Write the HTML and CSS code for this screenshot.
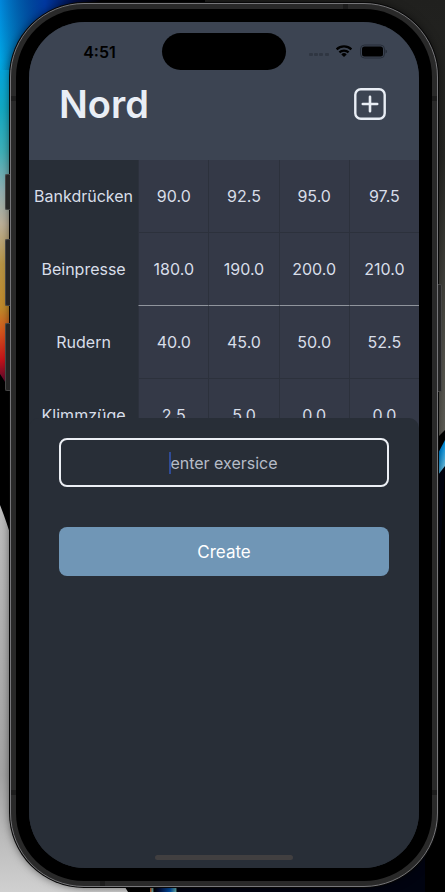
FILE: index.html
```html
<!DOCTYPE html>
<html lang="en">
<head>
  <meta charset="utf-8">
  <meta name="viewport" content="width=device-width, initial-scale=1">
  <title>Nord</title>
  <link rel="stylesheet" href="styles.css">
</head>
<body>
  <svg class="wallpaper" viewBox="0 0 445 892" preserveAspectRatio="none" aria-hidden="true">
    <defs>
      <linearGradient id="glow" x1="0" y1="0" x2="0" y2="400" gradientUnits="userSpaceOnUse">
        <stop offset="0" stop-color="#0087dc"/>
        <stop offset=".15" stop-color="#00a6e4"/>
        <stop offset=".27" stop-color="#12a9c4"/>
        <stop offset=".38" stop-color="#3fb0b8"/>
        <stop offset=".48" stop-color="#94aeb0"/>
        <stop offset=".56" stop-color="#bcb099"/>
        <stop offset=".66" stop-color="#b89646"/>
        <stop offset=".77" stop-color="#c08a2a"/>
        <stop offset=".83" stop-color="#d4551c"/>
        <stop offset=".9" stop-color="#c4131a"/>
        <stop offset=".96" stop-color="#4a0830"/>
        <stop offset="1" stop-color="#000"/>
      </linearGradient>
      <linearGradient id="night">
        <stop offset="0" stop-color="#000a3c" stop-opacity="0"/>
        <stop offset=".45" stop-color="#0038a0"/>
        <stop offset=".75" stop-color="#000f4c"/>
        <stop offset="1" stop-color="#000008"/>
      </linearGradient>
      <linearGradient id="stone" x1="0" y1="0" x2="0" y2="1">
        <stop offset="0" stop-color="#20201e"/>
        <stop offset=".35" stop-color="#262623"/>
        <stop offset=".8" stop-color="#54534c"/>
        <stop offset="1" stop-color="#62615a"/>
      </linearGradient>
      <linearGradient id="fog" x1="0" y1="0" x2="0" y2="1">
        <stop offset="0" stop-color="#bdbdbd"/>
        <stop offset=".7" stop-color="#a4a4a4"/>
        <stop offset="1" stop-color="#d0d0d0"/>
      </linearGradient>
      <linearGradient id="streak" x1="0" y1="0" x2="1" y2="1">
        <stop offset="0" stop-color="#0028a8"/>
        <stop offset=".5" stop-color="#0090e0"/>
        <stop offset="1" stop-color="#d8e8d8"/>
      </linearGradient>
      <linearGradient id="base">
        <stop offset="0" stop-color="#c44a10"/>
        <stop offset=".1" stop-color="#60a0a0"/>
        <stop offset=".15" stop-color="#000"/>
        <stop offset=".35" stop-color="#001040"/>
        <stop offset=".75" stop-color="#0050a8"/>
        <stop offset=".95" stop-color="#60a8a8"/>
        <stop offset="1" stop-color="#101820"/>
      </linearGradient>
    </defs>
    <rect width="445" height="892" fill="#000"/>
    <rect width="100" height="400" fill="url(#glow)"/>
    <rect width="100" height="70" fill="url(#night)"/>
    <path d="M0 374L14 396V500H0Z" fill="#000"/>
    <path d="M205 0H445V430L425 450V200H206Z" fill="url(#stone)"/>
    <path d="M0 505Q6 520 12 540V700L128 892H0Z" fill="url(#fog)"/>
    <path d="M445 466L425 492V892H177V850H425Z" fill="#000310"/>
    <path d="M445 440L425 478V492L445 466Z" fill="url(#streak)"/>
    <rect x="150" y="880" width="27" height="12" fill="url(#base)"/>
  </svg>

  <main class="phone">
    <span class="key key-action"></span>
    <span class="key key-up"></span>
    <span class="key key-down"></span>
    <span class="key key-power"></span>
    <span class="seam seam-left seam-high"></span>
    <span class="seam seam-left seam-low"></span>
    <span class="seam seam-right seam-high"></span>
    <span class="seam seam-right seam-low"></span>
    <span class="seam seam-top"></span>
    <span class="seam seam-bottom"></span>

    <div class="bezel">
      <div class="screen">
        <header class="header">
          <div class="status">
            <time class="clock">4:51</time>
            <span class="island"></span>
            <svg class="signals" viewBox="0 0 78 16" aria-hidden="true">
              <g fill="#2f3642">
                <rect y="9" width="4" height="3" rx="1"/>
                <rect x="5" y="9" width="4" height="3" rx="1"/>
                <rect x="10" y="9" width="4" height="3" rx="1"/>
                <rect x="16" y="9" width="4" height="3" rx="1"/>
              </g>
              <g fill="none" stroke="#000" stroke-width="2.3">
                <path d="M27.6 5.300A10.700 10.700 0 0 1 42.400 5.300"/>
                <path d="M30.400 8.400A6.600 6.600 0 0 1 39.600 8.400"/>
              </g>
              <path d="M32.300 10.400A3.800 3.800 0 0 1 37.700 10.400L35 13.100Z"/>
              <rect x="51.500" y="1" width="24" height="13" rx="4" fill="none" stroke="#262d38"/>
              <rect x="53" y="2.500" width="21" height="10" rx="2.500"/>
              <path d="M76.500 5.500Q78 6 78 7.500T76.500 9.500Z" fill="#262d38"/>
            </svg>
          </div>
          <div class="titlebar">
            <h1 class="title">Nord</h1>
            <button class="add" type="button" aria-label="Add">
              <svg viewBox="0 0 32 32" fill="none" stroke="#e9eef5" aria-hidden="true">
                <rect x="1.300" y="1.300" width="29.400" height="29.400" rx="5.500" stroke-width="2.400"/>
                <path d="M16 8.800V23.200M8.800 16H23.200" stroke-width="2.600" stroke-linecap="round"/>
              </svg>
            </button>
          </div>
        </header>

        <table class="log">
          <tbody>
            <tr><th scope="row">Bankdrücken</th><td>90.0</td><td>92.5</td><td>95.0</td><td>97.5</td></tr>
            <tr class="group-end"><th scope="row">Beinpresse</th><td>180.0</td><td>190.0</td><td>200.0</td><td>210.0</td></tr>
            <tr><th scope="row">Rudern</th><td>40.0</td><td>45.0</td><td>50.0</td><td>52.5</td></tr>
            <tr><th scope="row">Klimmzüge</th><td>2.5</td><td>5.0</td><td>0.0</td><td>0.0</td></tr>
          </tbody>
        </table>

        <form class="sheet">
          <div class="field">
            <input class="entry" type="text" placeholder="enter exersice" aria-label="Exercise name">
            <span class="caret"></span>
          </div>
          <button class="create" type="button">Create</button>
          <span class="home"></span>
        </form>
      </div>
    </div>
  </main>
</body>
</html>
```
FILE: styles.css
```css
* {
  box-sizing: border-box;
}

body {
  margin: 0;
  height: 100vh;
  padding: 3px 7px 5px 10px;
  overflow: hidden;
  background: #000;
  font-family: Inter, sans-serif;
  font-size: 16px;
  color: #d8dee9;
}

.wallpaper {
  position: absolute;
  inset: 0;
  width: 100%;
  height: 100%;
}

.phone {
  position: relative;
  height: 100%;
  padding: 5px;
  border: 1px solid #77777a;
  border-radius: 74px;
  background: #292929;
  box-shadow: 0 0 0 1px #080808, 0 0 10px rgba(0, 0, 0, 0.6);
}

.bezel {
  height: 100%;
  padding: 13px;
  border-radius: 68px;
  background: #000;
}

.screen {
  position: relative;
  height: 100%;
  overflow: hidden;
  border-radius: 56px;
  background: #282e37;
}

.key {
  position: absolute;
  left: -6px;
  width: 5px;
  border: 1px solid #464646;
  border-right: 0;
  border-radius: 2px 0 0 2px;
  background: #252525;
}

.key-action {
  top: 170px;
  height: 36px;
}

.key-up {
  top: 235px;
  height: 67px;
}

.key-down {
  top: 319px;
  height: 68px;
}

.key-power {
  top: 280px;
  left: auto;
  right: -5px;
  width: 4px;
  height: 108px;
  border: 1px solid #464646;
  border-left: 0;
  border-radius: 0 2px 2px 0;
}

.seam {
  position: absolute;
  width: 5px;
  height: 5px;
  background: #1c1c1c;
}

.seam-left { left: 0; }
.seam-right { right: 0; }
.seam-high { top: 92px; }
.seam-low { bottom: 91px; }
.seam-top { top: 0; right: 89px; }
.seam-bottom { bottom: 0; left: 89px; }

.header {
  height: 138px;
  background: #3c4452;
}

.status {
  display: grid;
  grid-template-columns: 1fr 124px 1fr;
  align-items: center;
  height: 52px;
  padding-top: 7px;
}

.clock {
  padding-left: 8px;
  text-align: center;
  font-weight: 600;
  color: #000;
}

.island {
  height: 37px;
  border-radius: 19px;
  background: #000;
}

.signals {
  justify-self: end;
  width: 78px;
  height: 16px;
  margin-right: 32px;
}

.titlebar {
  display: flex;
  align-items: center;
  justify-content: space-between;
  height: 60px;
  padding: 0 33px 0 30px;
}

.title {
  margin: 0;
  font-size: 38px;
  font-weight: 600;
  line-height: 48px;
  color: #e9eef5;
}

.add {
  width: 32px;
  height: 32px;
  padding: 0;
  border: 0;
  background: none;
}

.add svg {
  display: block;
}

.log {
  width: 100%;
  table-layout: fixed;
  border-collapse: separate;
  border-spacing: 0;
}

.log th,
.log td {
  height: 73px;
  padding: 0;
  text-align: center;
  font-weight: 400;
}

.log th {
  width: 28%;
  border-bottom: 1px solid #282e37;
  background: #282e37;
}

.log td {
  border-left: 1px solid #2c313c;
  border-bottom: 1px solid #2c313c;
  background: #343947;
}

.log .group-end td {
  border-bottom-color: #90959d;
}

.sheet {
  position: absolute;
  inset: auto 0 0;
  display: flex;
  flex-direction: column;
  gap: 40px;
  height: 450px;
  padding: 20px 30px 8px;
  border-radius: 10px 10px 0 0;
  background: #282e37;
}

.field {
  position: relative;
}

.entry {
  display: block;
  width: 100%;
  height: 49px;
  padding: 0;
  border: 2px solid #eceff4;
  border-radius: 8px;
  background: none;
  font: inherit;
  text-align: center;
  color: #eceff4;
}

.entry::placeholder {
  color: #b6bcc7;
  opacity: 1;
}

.caret {
  position: absolute;
  top: 14px;
  left: calc(50% - 55px);
  width: 2px;
  height: 22px;
  background: #2f4b96;
}

.create {
  height: 49px;
  border: 0;
  border-radius: 8px;
  background: #7096b6;
  font: inherit;
  font-size: 17px;
  color: #fff;
}

.home {
  align-self: center;
  width: 138px;
  height: 5px;
  margin-top: auto;
  border-radius: 3px;
  background: #413f40;
}
```
